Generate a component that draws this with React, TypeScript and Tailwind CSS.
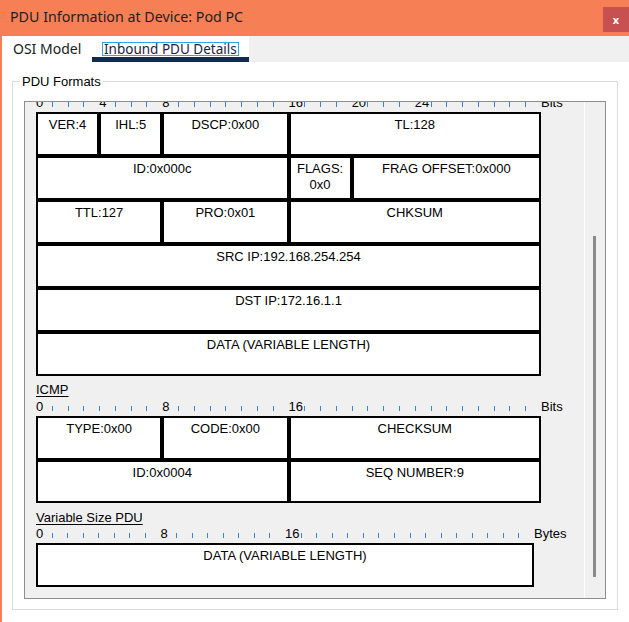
import * as React from 'react';

interface Field {
  label: string;
  span: string;
}

// bit-field rows, span classes written out so Tailwind picks them up
const ipv4Rows: Field[][] = [
  [
    { label: 'VER:4', span: 'col-span-4' },
    { label: 'IHL:5', span: 'col-span-4' },
    { label: 'DSCP:0x00', span: 'col-span-8' },
    { label: 'TL:128', span: 'col-span-16' },
  ],
  [
    { label: 'ID:0x000c', span: 'col-span-16' },
    { label: 'FLAGS:\n0x0', span: 'col-span-4' },
    { label: 'FRAG OFFSET:0x000', span: 'col-span-12' },
  ],
  [
    { label: 'TTL:127', span: 'col-span-8' },
    { label: 'PRO:0x01', span: 'col-span-8' },
    { label: 'CHKSUM', span: 'col-span-16' },
  ],
  [{ label: 'SRC IP:192.168.254.254', span: 'col-span-32' }],
  [{ label: 'DST IP:172.16.1.1', span: 'col-span-32' }],
  [{ label: 'DATA (VARIABLE LENGTH)', span: 'col-span-32' }],
];

const icmpRows: Field[][] = [
  [
    { label: 'TYPE:0x00', span: 'col-span-8' },
    { label: 'CODE:0x00', span: 'col-span-8' },
    { label: 'CHECKSUM', span: 'col-span-16' },
  ],
  [
    { label: 'ID:0x0004', span: 'col-span-16' },
    { label: 'SEQ NUMBER:9', span: 'col-span-16' },
  ],
];

const Ruler = ({
  width,
  labels,
  unit,
  className,
}: {
  width: number;
  labels: number[];
  unit: string;
  className: string;
}) => {
  const step = width / 32;
  return (
    <div className={`relative h-[17px] shrink-0 ${className}`}>
      {Array.from({ length: 32 }, (_, i) =>
        labels.includes(i) ? (
          <span key={i} className="absolute top-0 leading-[16px]" style={{ left: i * step }}>
            {i}
          </span>
        ) : (
          <span
            key={i}
            className="absolute top-[7px] h-[5px] w-px bg-[#3b82d6]"
            style={{ left: i * step }}
          />
        )
      )}
      <span className="absolute top-0 leading-[16px]" style={{ left: width }}>
        {unit}
      </span>
    </div>
  );
};

const FieldTable = ({ rows, rowClass }: { rows: Field[][]; rowClass: string }) => (
  <div className={`grid w-[505px] grid-cols-32 shrink-0 ${rowClass}`}>
    {rows.flat().map((f, i) => (
      <div
        key={i}
        className={`${f.span} border-2 border-black bg-white pt-[3px] text-center leading-[16px] whitespace-pre-line`}
      >
        {f.label}
      </div>
    ))}
  </div>
);

export default function App() {
  return (
    <div className="w-[629px] h-[622px] bg-white flex flex-col overflow-hidden">
      {/* title bar */}
      <div className="h-[36px] shrink-0 bg-[#f67f56] flex justify-between">
        <span className="pl-[10px] pt-[7px] leading-[20px] text-[14.25px] text-[#1e1e1e] font-['Noto_Sans',sans-serif]">
          PDU Information at Device: Pod PC
        </span>
        <div className="mt-[7px] w-[26px] h-[25px] bg-[#c75050] flex items-center justify-center text-white text-[11px] font-bold leading-none font-['Noto_Sans',sans-serif]">
          x
        </div>
      </div>

      <div className="flex-1 border-l-2 border-[#f67f56] flex flex-col">
        {/* tabs */}
        <div className="h-[26px] shrink-0 flex font-['Noto_Sans',sans-serif] text-[14px]">
          <div className="w-[90px] bg-white pl-[11px] pt-[3px] leading-[19px] text-[#1a1a1a]">OSI Model</div>
          <div className="w-[157px] h-[26px] bg-white flex flex-col">
            <div className="flex pl-[10px] pt-[6px]">
              <span className="block border border-[#2aa9e0] px-px leading-[12px] text-[13.5px] text-[#1a2440]">
                Inbound PDU Details
              </span>
            </div>
            <div className="mt-auto h-[5px] bg-[#122a4c]" />
          </div>
          <div className="flex-1 bg-[#f0f0f0]" />
        </div>

        {/* group box */}
        <div className="relative ml-[10px] mt-[19px] w-[606px] h-[529px] border border-[#dcdcdc] pl-[11px] pt-[19px] font-['Liberation_Sans',Arial,sans-serif] text-[13px] text-black">
          <span className="absolute left-[7px] top-[-9px] bg-white px-[2px] leading-[18px]">PDU Formats</span>

          <div className="w-[582px] h-[498px] border border-[#8e8e8e] bg-[#f0f0f0] flex">
            <div className="w-[559px] overflow-hidden pl-[11px]">
              <div className="-mt-[7px] flex flex-col">
                <Ruler width={505} labels={[0, 4, 8, 16, 20, 24]} unit="Bits" className="w-[505px]" />
                <FieldTable rows={ipv4Rows} rowClass="auto-rows-[44px]" />

                <span className="mt-[6px] leading-[16px] underline underline-offset-[2px]">ICMP</span>
                <Ruler width={505} labels={[0, 8, 16]} unit="Bits" className="mt-px w-[505px]" />
                <FieldTable rows={icmpRows} rowClass="auto-rows-[43.5px]" />

                <span className="mt-[7px] leading-[16px] underline underline-offset-[2px]">Variable Size PDU</span>
                <Ruler width={498} labels={[0, 8, 16]} unit="Bytes" className="w-[498px]" />
                <div className="w-[498px] h-[43.5px] shrink-0 border-2 border-black bg-white pt-[3px] text-center leading-[16px]">
                  DATA (VARIABLE LENGTH)
                </div>
              </div>
            </div>
            <div className="w-px bg-white" />
            <div className="w-[20px]">
              <div className="ml-[8px] mt-[134px] w-[3px] h-[341px] bg-[#8a8a8a]" />
            </div>
          </div>
        </div>
      </div>
    </div>
  );
}
